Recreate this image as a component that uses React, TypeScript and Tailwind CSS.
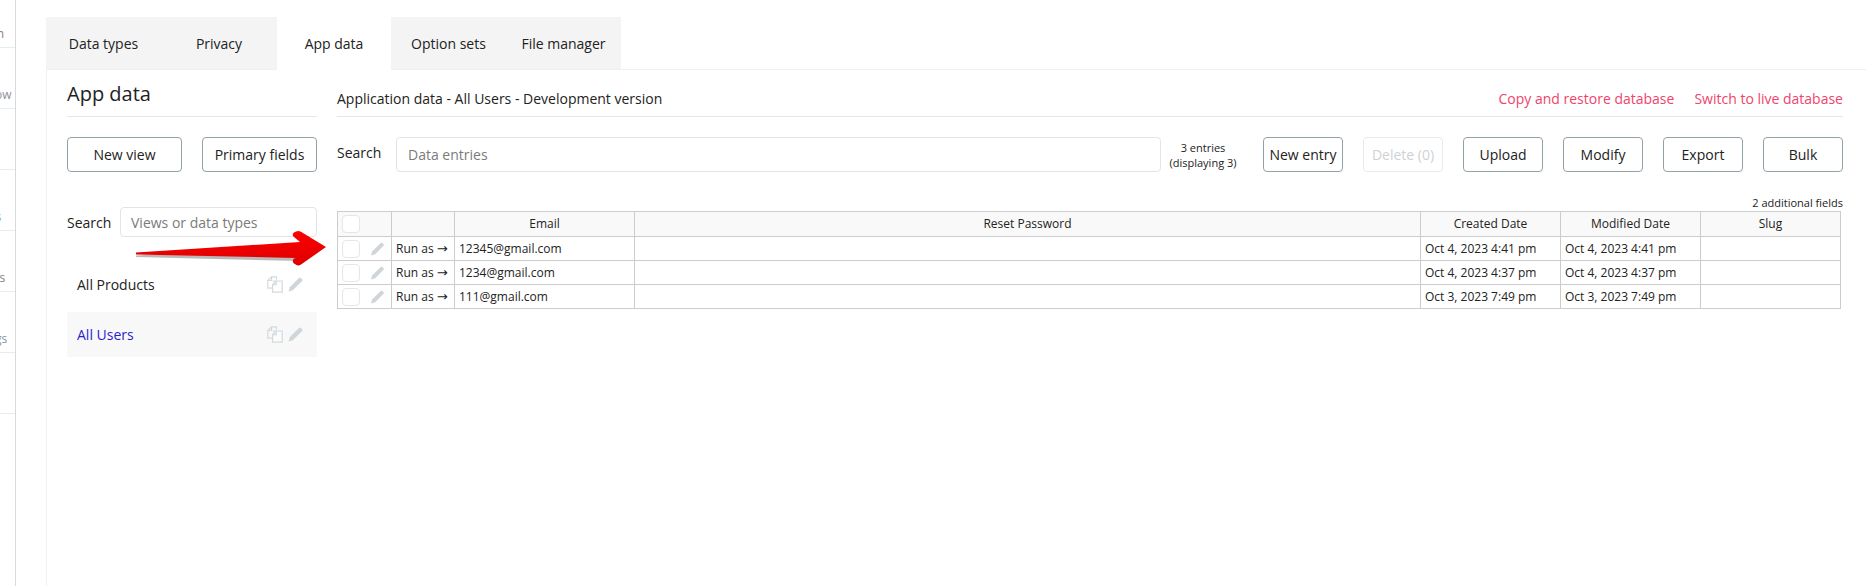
const navItems = [
  { label: "Design", color: "text-[#8a7d78]" },
  { label: "Workflow", color: "text-[#8d9299]" },
  { label: "", color: "" },
  { label: "Styles", color: "text-[#6aa7e0]" },
  { label: "Plugins", color: "text-[#85807e]" },
  { label: "Settings", color: "text-[#8d9299]" },
  { label: "", color: "" },
];

const tabs = ["Data types", "Privacy", "App data", "Option sets", "File manager"];
const actions = ["Upload", "Modify", "Export", "Bulk"];
const rows = [
  { email: "12345@gmail.com", created: "Oct 4, 2023 4:41 pm" },
  { email: "1234@gmail.com", created: "Oct 4, 2023 4:37 pm" },
  { email: "111@gmail.com", created: "Oct 3, 2023 7:49 pm" },
];

function Pencil({ className = "" }: { className?: string }) {
  return (
    <svg viewBox="0 0 16 16" className={className} fill="#cfd6da">
      <path d="M0.6 15.4 L1.8 10.9 L11.6 1.1 Q12.6 0.2 13.6 1 L15 2.4 Q15.8 3.4 14.9 4.4 L5.1 14.2 Z" />
    </svg>
  );
}

function CopyIcon() {
  return (
    <svg viewBox="0 0 16 17" className="h-[17px] w-[16px]" fill="none" stroke="#d3dade" strokeWidth="1.2">
      <path d="M9.5 3.5 V0.8 H4.5 L0.8 4.5 V12.2 H5.5" />
      <path d="M4.5 0.8 V4.5 H0.8" />
      <path d="M5.6 5 H11 L15.2 5 V16.2 H5.6 V8.6 L9.2 5" fill="#ffffff" fillOpacity="0.6" />
      <path d="M9.2 5 V8.6 H5.6" />
    </svg>
  );
}

function Checkbox() {
  return <span className="block h-[18px] w-[18px] rounded-[4px] border border-[#e4e6e8] bg-white" />;
}

function OutlineButton({ label, className = "" }: { label: string; className?: string }) {
  return (
    <button className={`h-[35px] rounded-[4px] border border-[#93a1a8] bg-white text-[14px] text-[#222] ${className}`}>
      {label}
    </button>
  );
}

function ListItem({ label, active = false }: { label: string; active?: boolean }) {
  return (
    <div className={`flex h-[45px] items-center justify-between pl-[10px] pr-[14px] text-[14px] ${active ? "bg-[#f8f8f8] text-[#2a1fd0]" : "text-[#222]"}`}>
      <span>{label}</span>
      <span className="flex items-center gap-[5px]">
        <CopyIcon />
        <Pencil className="h-[15px] w-[15px]" />
      </span>
    </div>
  );
}

function Arrow() {
  return (
    <svg viewBox="0 0 200 40" className="pointer-events-none absolute left-[132px] top-[229px] h-[40px] w-[200px]">
      <defs>
        <linearGradient id="arrowFill" x1="0" y1="0" x2="0" y2="1">
          <stop offset="0" stopColor="#ff0000" />
          <stop offset="1" stopColor="#dc0000" />
        </linearGradient>
      </defs>
      <path d="M4 25 L168 16 L168 30.5 L4 26.5 Z" fill="#b9b9b9" transform="translate(0 1.5)" />
      <path
        d="M4 23.5 L168 13 L162 8 Q159.5 5.5 162 3.5 L164 2.5 Q166 1.5 168.5 2.5 L194 18 L169 35.5 Q166.5 37 164.5 36 L162 34.5 Q159.5 32 162 29.5 L164 28.9 L4 25.5 Z"
        fill="url(#arrowFill)"
      />
    </svg>
  );
}

export default function App() {
  return (
    <div className="relative flex h-[586px] w-[1866px] overflow-hidden bg-white text-[#222] [font-family:'Open_Sans',sans-serif]">
      <nav className="w-[16px] shrink-0 overflow-hidden border-r border-[#d9d9d9]">
        <div className="-mt-[13px]">
          {navItems.map((item, i) => (
            <div key={i} className="h-[61px] border-b border-[#e4eef2] pt-[39px] text-[12px] leading-[16px]">
              <div className={`-ml-[51px] w-[72px] text-center ${item.color}`}>{item.label}</div>
            </div>
          ))}
        </div>
      </nav>

      <div className="ml-[30px] flex min-w-0 flex-1 flex-col pt-[17px]">
        <div className="flex h-[53px] border-b border-[#f0f0f0]">
          <div className="grid grid-cols-[115px_116px_114px_115px_115px]">
            {tabs.map((tab) => (
              <div
                key={tab}
                className={`flex items-center justify-center text-[14px] ${tab === "App data" ? "-mb-px bg-white" : "bg-[#f4f4f4]"}`}
              >
                {tab}
              </div>
            ))}
          </div>
        </div>

        <div className="flex flex-1 gap-[20px] border-l border-[#f0f0f0] pl-[20px] pr-[23px]">
          <aside className="w-[250px] shrink-0">
            <div className="flex h-[47px] items-center border-b border-[#e4e6e8] pt-[1px] text-[20px]">App data</div>
            <div className="mt-[20px] flex justify-between">
              <OutlineButton label="New view" className="w-[115px]" />
              <OutlineButton label="Primary fields" className="w-[115px]" />
            </div>
            <div className="mt-[35px] flex items-center justify-between">
              <span className="text-[14px]">Search</span>
              <div className="flex h-[30px] w-[197px] items-center rounded-[4px] border border-[#e2e4e6] pl-[10px] text-[14px] text-[#7b7b7b]">
                Views or data types
              </div>
            </div>
            <div className="mt-[25px]">
              <ListItem label="All Products" />
              <div className="h-[5px]" />
              <ListItem label="All Users" active />
            </div>
          </aside>

          <main className="min-w-0 flex-1">
            <div className="flex h-[47px] items-center justify-between border-b border-[#e4e6e8] pt-[10px] text-[14px]">
              <span>Application data - All Users - Development version</span>
              <span className="flex gap-[20px] text-[#f0446a]">
                <span>Copy and restore database</span>
                <span>Switch to live database</span>
              </span>
            </div>

            <div className="mt-[20px] flex h-[35px] items-center">
              <span className="w-[59px] shrink-0 pb-[5px] text-[14px]">Search</span>
              <div className="flex h-[35px] w-[765px] shrink-0 items-center rounded-[4px] border border-[#e2e4e6] pl-[11px] text-[14px] text-[#7b7b7b]">
                Data entries
              </div>
              <div className="mr-[18px] w-[84px] shrink-0 text-center text-[11px] leading-[15px]">
                3 entries
                <br />
                (displaying 3)
              </div>
              <div className="flex gap-[20px]">
                <OutlineButton label="New entry" className="w-[80px]" />
                <button className="h-[35px] w-[80px] rounded-[4px] border border-[#e8eaeb] bg-white text-[14px] text-[#cfd2d4]">
                  Delete (0)
                </button>
                {actions.map((a) => (
                  <OutlineButton key={a} label={a} className="w-[80px]" />
                ))}
              </div>
            </div>

            <div className="mt-[23px] h-[16px] text-right text-[11px] leading-[16px]">2 additional fields</div>

            <table className="w-[1503px] table-fixed border-collapse text-[12px]">
              <colgroup>
                <col className="w-[54px]" />
                <col className="w-[63px]" />
                <col className="w-[180px]" />
                <col className="w-[786px]" />
                <col className="w-[140px]" />
                <col className="w-[140px]" />
                <col className="w-[140px]" />
              </colgroup>
              <thead>
                <tr className="h-[25px] bg-[#f9f9f9]">
                  <th className="border border-[#cccccc] pl-[4px] font-normal">
                    <Checkbox />
                  </th>
                  <th className="border border-[#cccccc] font-normal" />
                  {["Email", "Reset Password", "Created Date", "Modified Date", "Slug"].map((h) => (
                    <th key={h} className="border border-[#cccccc] text-center font-normal">
                      {h}
                    </th>
                  ))}
                </tr>
              </thead>
              <tbody>
                {rows.map((r) => (
                  <tr key={r.email} className="h-[24px]">
                    <td className="border border-[#cccccc] pl-[4px]">
                      <div className="flex items-center gap-[10px]">
                        <Checkbox />
                        <Pencil className="h-[14px] w-[15px]" />
                      </div>
                    </td>
                    <td className="overflow-hidden whitespace-nowrap border border-[#cccccc] pl-[4px]">
                      Run as <span className="text-[13px] leading-[12px] [font-family:'DejaVu_Sans',sans-serif]">→</span>
                    </td>
                    <td className="border border-[#cccccc] pl-[4px]">{r.email}</td>
                    <td className="border border-[#cccccc]" />
                    <td className="border border-[#cccccc] pl-[4px]">{r.created}</td>
                    <td className="border border-[#cccccc] pl-[4px]">{r.created}</td>
                    <td className="border border-[#cccccc]" />
                  </tr>
                ))}
              </tbody>
            </table>
          </main>
        </div>
      </div>

      <Arrow />
    </div>
  );
}
